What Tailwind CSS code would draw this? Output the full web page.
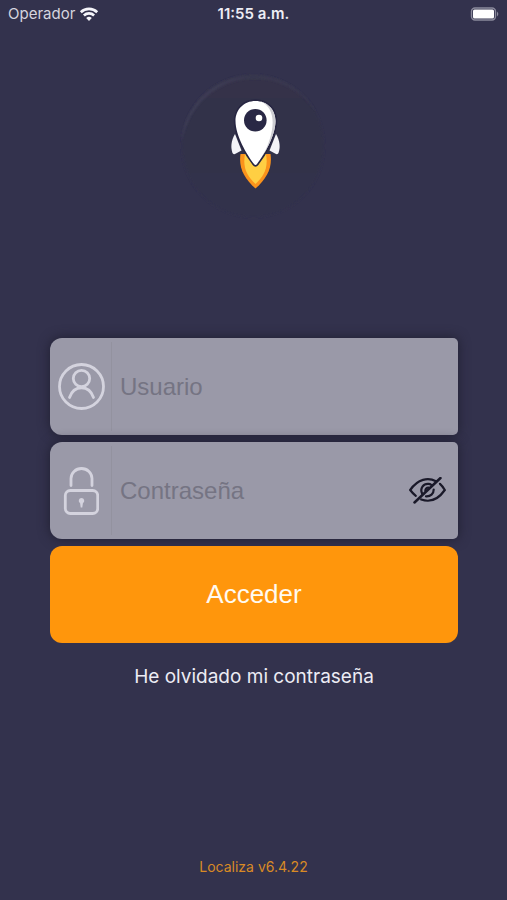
<!DOCTYPE html>
<html lang="es">
<head>
<meta charset="utf-8">
<meta name="viewport" content="width=device-width, initial-scale=1">
<title>Localiza</title>
<script src="https://cdn.jsdelivr.net/npm/@tailwindcss/browser@4"></script>
</head>
<body class="flex min-h-screen flex-col bg-[#33324d] font-['Inter','Liberation_Sans',sans-serif] text-[#ececf4]">
<header class="grid h-7 grid-cols-3 items-center px-2 text-[15px]">
  <div class="flex items-center gap-1 text-[#d5d5df]">
    <span>Operador</span>
    <svg class="h-[15px] w-5" viewBox="0 0 20 15" fill="none" stroke="#f5f5fa" stroke-width="2.6" aria-label="Wi-Fi"><path d="M1.800 5.200a11.700 11.700 0 0 1 16.400 0M4.900 8.500a7.300 7.300 0 0 1 10.200 0"/><path d="M10 14l-2.800-2.900a4 4 0 0 1 5.600 0z" fill="#f5f5fa" stroke="none"/></svg>
  </div>
  <time class="text-center font-semibold">11:55 a.m.</time>
  <svg class="h-[14px] w-[30px] justify-self-end" viewBox="0 0 30 14" aria-label="Batería"><rect x="2.500" y="1" width="24" height="12" rx="3.5" fill="none" stroke="#8b8a9c" stroke-width="1.4"/><rect x="4" y="2.500" width="21" height="9" rx="1.500" fill="#fff"/><path d="M28 4.500q2.600 2.500 0 5z" fill="#8b8a9c"/></svg>
</header>
<main class="flex flex-1 flex-col pr-[49px] pl-[50px]">
  <svg class="mt-11 h-[148px] w-[148px] self-center" viewBox="180 72 148 148" role="img" aria-label="Localiza">
    <defs>
      <linearGradient id="disc" x1="0" y1="0" x2="0" y2="1"><stop offset="0" stop-color="#35344a"/><stop offset=".5" stop-color="#31304a"/><stop offset="1" stop-color="#32314c"/></linearGradient>
      <linearGradient id="rim" x1="0" y1="0" x2="1" y2="0"><stop offset="0" stop-color="#42415a"/><stop offset=".5" stop-color="#393850"/><stop offset="1" stop-color="#3c3b52"/></linearGradient>
      <filter id="soft"><feGaussianBlur stdDeviation="1"/></filter>
      <clipPath id="body"><path d="M255.500 101C244 101 235.500 109.500 235.500 121C235.500 136 247 155 254 164Q255.500 166 257 164C264 155 275.500 136 275.500 121C275.500 109.500 267 101 255.500 101Z"/></clipPath>
    </defs>
    <circle cx="253" cy="146" r="71" fill="url(#disc)" filter="url(#soft)"/>
    <path d="M181.500 142A72 72 0 0 1 316 112A73 73 0 0 0 186 126Q183.500 132 181.500 142Z" fill="url(#rim)" filter="url(#soft)"/>
    <path d="M240.500 154C238.500 168 244 178 255.500 188.500C267 178 272.500 168 270.500 154Z" fill="#fb931c"/>
    <path d="M245 154C242.500 168 247 176 255.500 184C264 176 268.500 168 266 154Z" fill="#ffcf43"/>
    <path d="M235 134C231 141 230.500 147 232.500 153Q233 154.500 235 154L241.500 150.500Z" fill="#f4f4f8"/>
    <path d="M276 134C280 141 280.500 147 278.500 153Q278 154.500 276 154L269.500 150.500Z" fill="#f4f4f8"/>
    <path d="M255.500 101C244 101 235.500 109.500 235.500 121C235.500 136 247 155 254 164Q255.500 166 257 164C264 155 275.500 136 275.500 121C275.500 109.500 267 101 255.500 101Z" fill="#fff" stroke="#272642" stroke-width="3.400"/>
    <g clip-path="url(#body)"><rect x="235" y="100" width="41" height="67" fill="#fff"/><path d="M258 100C278 107 276 132 261 159L282 145V100Z" fill="#cdcdd2"/></g>
    <circle cx="255.300" cy="120.300" r="11.300" fill="#292845"/>
    <circle cx="259" cy="118" r="3.300" fill="#fff"/>
  </svg>
  <form class="mt-[118px] flex flex-col gap-[7px]" onsubmit="return false">
    <div class="flex h-[97px] items-center rounded-l-xl rounded-r-[5px] bg-[#9a99a8] shadow-[0_0_12px_#201f30]">
      <label for="usuario" class="my-1 flex w-[62px] items-center justify-center self-stretch border-r border-[#93929f]" aria-label="Usuario">
        <svg class="h-12 w-12" viewBox="0 0 48 48" fill="none" stroke="#d4d3de" stroke-width="2.800" stroke-linecap="round"><circle cx="24.500" cy="23.500" r="22"/><circle cx="24.500" cy="15.500" r="8.200"/><path d="M12.500 34.500C17 21.500 32 21.500 36.500 34.500"/></svg>
      </label>
      <input id="usuario" type="text" placeholder="Usuario" class="h-full min-w-0 flex-1 px-2 font-['Liberation_Sans',sans-serif] text-2xl text-[#33324d] outline-none placeholder:text-[#757483]">
    </div>
    <div class="flex h-[97px] items-center rounded-l-xl rounded-r-[5px] bg-[#9a99a8] shadow-[0_0_12px_#201f30]">
      <label for="clave" class="my-1 flex w-[62px] items-center justify-center self-stretch border-r border-[#93929f]" aria-label="Contraseña">
        <svg class="h-12 w-9" viewBox="0 0 36 48" fill="none" stroke="#d4d3de" stroke-width="2.800" stroke-linecap="round"><path d="M8 18.500V11.500a10.500 10 0 0 1 21 0v7"/><rect x="2.300" y="23.500" width="32.400" height="23" rx="5"/><path d="M18.500 31a2.800 2.800 0 0 1 1.400 5.200l-.6 4.300h-1.600l-.6-4.300a2.800 2.800 0 0 1 1.400-5.200z" fill="#d4d3de" stroke="none"/></svg>
      </label>
      <input id="clave" type="password" placeholder="Contraseña" class="h-full min-w-0 flex-1 px-2 font-['Liberation_Sans',sans-serif] text-2xl text-[#33324d] outline-none placeholder:text-[#757483]">
      <button type="button" aria-label="Mostrar contraseña" class="mr-3">
        <svg class="block h-7 w-[37px]" viewBox="0 0 37 28" fill="none" stroke="#1a1929" stroke-width="2.200" stroke-linecap="round"><path d="M6.800 18.800Q3.800 16.500 1.200 13C9 1.800 19 .2 27 4.200M31 6.800Q33.500 9 35.800 13C29 22.800 20.500 25.500 12.200 22.500"/><path d="M13.200 16.800C10.500 11.500 14.500 6.500 19.500 6.900Q21 7 22.300 7.900M24.700 12.500C24.700 17 21.500 19.600 17 19.300M16.300 13.700Q16.500 10.700 19.500 10.500"/><path d="M5.500 25.500L31.500 1" stroke-width="2.500"/></svg>
      </button>
    </div>
    <button type="submit" class="z-10 h-[97px] rounded-xl bg-[#ff960c] font-['Liberation_Sans',sans-serif] text-[26px] text-[#fffaf0]">Acceder</button>
  </form>
  <a href="#" class="mt-5 self-center text-[19px] leading-7">He olvidado mi contraseña</a>
</main>
<footer class="pb-[23px] text-center text-sm text-[#d98a25]">Localiza v6.4.22</footer>
</body>
</html>
